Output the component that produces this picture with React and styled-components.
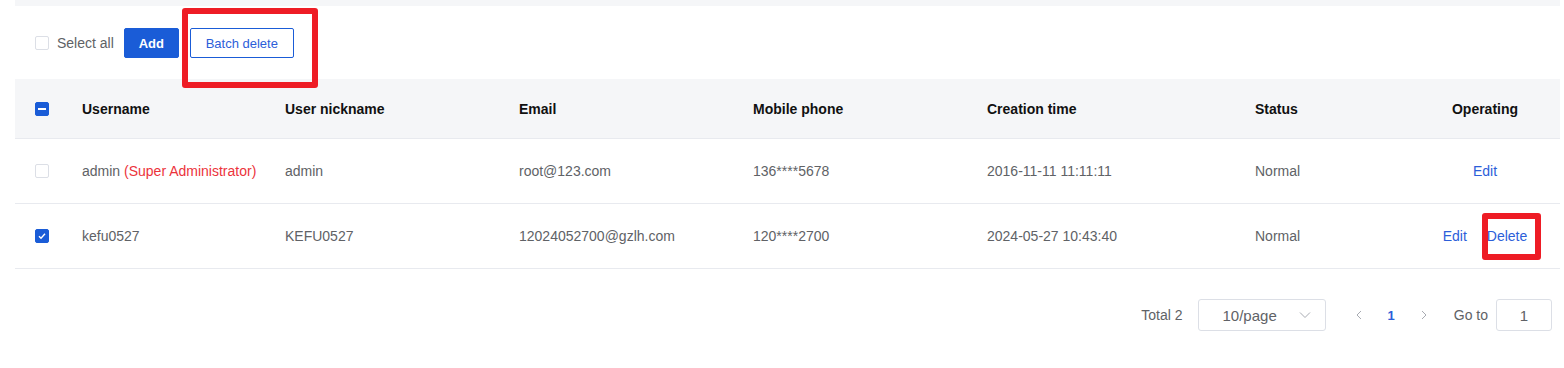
import React from 'react';
import styled, { createGlobalStyle } from 'styled-components';

const GlobalStyle = createGlobalStyle`
    body {
        margin: 0;
        background: #fff;
        font-family: "Liberation Sans", Arial, sans-serif;
    }
`;

const BLUE = '#1a5cd7';
const LINK = '#2c5ed9';

const Page = styled.div`
    position: relative;
    width: 1545px;
    margin-left: 15px;
    height: 368px;
`;

const TopStrip = styled.div`
    height: 6px;
    background: #f5f6f8;
`;

const Toolbar = styled.div`
    display: flex;
    align-items: center;
    height: 73px;
    padding-left: 20px;
    padding-top: 1px;
    box-sizing: border-box;
`;

const Box = styled.span`
    display: inline-flex;
    align-items: center;
    justify-content: center;
    width: 14px;
    height: 14px;
    box-sizing: border-box;
    border-radius: 2px;
    border: 1px solid ${p => (p.$on ? BLUE : '#dcdfe6')};
    background: ${p => (p.$on ? BLUE : '#fff')};
    flex: none;
`;

const SelectLabel = styled.span`
    margin-left: 8px;
    font-size: 14px;
    color: #606266;
`;

const Button = styled.button`
    height: 30px;
    box-sizing: border-box;
    border-radius: 2px;
    font-family: inherit;
    font-size: 13px;
    padding: 0;
    border: 1px solid ${BLUE};
    background: ${p => (p.$primary ? BLUE : '#fff')};
    color: ${p => (p.$primary ? '#fff' : LINK)};
    font-weight: ${p => (p.$primary ? 700 : 400)};
    width: ${p => p.$w}px;
    margin-left: ${p => p.$ml}px;
`;

const Grid = styled.div`
    display: grid;
    grid-template-columns: 67px 203px 234px 234px 234px 268px 155px 150px;
    align-items: center;
    height: ${p => p.$h}px;
    background: ${p => (p.$head ? '#f5f6f8' : '#fff')};
    border-bottom: 1px solid #e8eaef;
    box-sizing: border-box;
    font-size: 14px;
    color: ${p => (p.$head ? '#111' : '#606266')};
    font-weight: ${p => (p.$head ? 700 : 400)};
`;

const Cell = styled.div`
    display: flex;
    align-items: center;
    padding-left: ${p => (p.$check ? '20px' : '0')};
    justify-content: ${p => (p.$center ? 'center' : 'flex-start')};
    gap: ${p => (p.$center ? '20px' : '0')};
    white-space: pre;
`;

const Red = styled.span`
    color: #ec333b;
`;

const Link = styled.span`
    color: ${LINK};
`;

const Mark = styled.div`
    position: absolute;
    border: 6px solid #ee1c25;
    border-radius: 3px;
    box-sizing: border-box;
    pointer-events: none;
`;

const Pager = styled.div`
    display: flex;
    align-items: center;
    justify-content: flex-end;
    margin-top: 30px;
    padding-right: 8px;
    font-size: 14px;
    color: #606266;
`;

const SizeSelect = styled.div`
    position: relative;
    display: flex;
    align-items: center;
    width: 128px;
    height: 32px;
    box-sizing: border-box;
    border: 1px solid #dcdfe6;
    border-radius: 3px;
    margin-left: 15px;
    margin-right: 29px;
    padding-left: 24px;
    font-size: 15px;
    color: #606266;
`;

const Arrow = styled.svg`
    position: absolute;
    right: 14px;
    top: 11px;
`;

const PageNum = styled.span`
    color: ${LINK};
    font-weight: 700;
    font-size: 13px;
    margin: 0 25px;
`;

const GoLabel = styled.span`
    margin-left: 26px;
`;

const GoInput = styled.div`
    display: flex;
    align-items: center;
    justify-content: center;
    width: 56px;
    height: 32px;
    box-sizing: border-box;
    border: 1px solid #dcdfe6;
    border-radius: 3px;
    margin-left: 8px;
    font-size: 15px;
`;

const Check = ({ on, half }) => (
    <Box $on={on || half}>
        {on && (
            <svg width="10" height="10" viewBox="0 0 10 10">
                <path d="M2 5.2l2 2 4-4.4" fill="none" stroke="#fff" strokeWidth="1.4" />
            </svg>
        )}
        {half && <svg width="8" height="2"><rect width="8" height="2" fill="#fff" /></svg>}
    </Box>
);

const Chevron = ({ dir }) => (
    <svg width="8" height="10" viewBox="0 0 8 10">
        <path
            d={dir === 'left' ? 'M6 1L2 5l4 4' : 'M2 1l4 4-4 4'}
            fill="none"
            stroke="#a8abb2"
            strokeWidth="1"
        />
    </svg>
);

const rows = [
    {
        user: 'admin',
        role: '(Super Administrator)',
        nick: 'admin',
        email: 'root@123.com',
        phone: '136****5678',
        time: '2016-11-11 11:11:11',
        ops: ['Edit']
    },
    {
        user: 'kefu0527',
        nick: 'KEFU0527',
        email: '12024052700@gzlh.com',
        phone: '120****2700',
        time: '2024-05-27 10:43:40',
        ops: ['Edit', 'Delete'],
        checked: true
    }
];

export default function App() {
    return (
        <Page>
            <GlobalStyle />
            <TopStrip />
            <Toolbar>
                <Check />
                <SelectLabel>Select all</SelectLabel>
                <Button $primary $w={55} $ml={10}>Add</Button>
                <Button $w={104} $ml={11}>Batch delete</Button>
            </Toolbar>
            <Grid $head $h={60}>
                <Cell $check><Check half /></Cell>
                <Cell>Username</Cell>
                <Cell>User nickname</Cell>
                <Cell>Email</Cell>
                <Cell>Mobile phone</Cell>
                <Cell>Creation time</Cell>
                <Cell>Status</Cell>
                <Cell $center>Operating</Cell>
            </Grid>
            {rows.map(r => (
                <Grid key={r.user} $h={65}>
                    <Cell $check><Check on={r.checked} /></Cell>
                    <Cell>
                        <span>
                            {r.user}
                            {r.role && <Red> {r.role}</Red>}
                        </span>
                    </Cell>
                    <Cell>{r.nick}</Cell>
                    <Cell>{r.email}</Cell>
                    <Cell>{r.phone}</Cell>
                    <Cell>{r.time}</Cell>
                    <Cell>Normal</Cell>
                    <Cell $center>
                        {r.ops.map(o => <Link key={o}>{o}</Link>)}
                    </Cell>
                </Grid>
            ))}
            <Pager>
                <span>Total 2</span>
                <SizeSelect>
                    10/page
                    <Arrow width="12" height="8" viewBox="0 0 12 8">
                        <path d="M1 1.5l5 5 5-5" fill="none" stroke="#a8abb2" strokeWidth="1" />
                    </Arrow>
                </SizeSelect>
                <Chevron dir="left" />
                <PageNum>1</PageNum>
                <Chevron dir="right" />
                <GoLabel>Go to</GoLabel>
                <GoInput>1</GoInput>
            </Pager>
            <Mark style={{ left: 167, top: 8, width: 136, height: 80 }} />
            <Mark style={{ left: 1467, top: 213, width: 59, height: 47 }} />
        </Page>
    );
}
